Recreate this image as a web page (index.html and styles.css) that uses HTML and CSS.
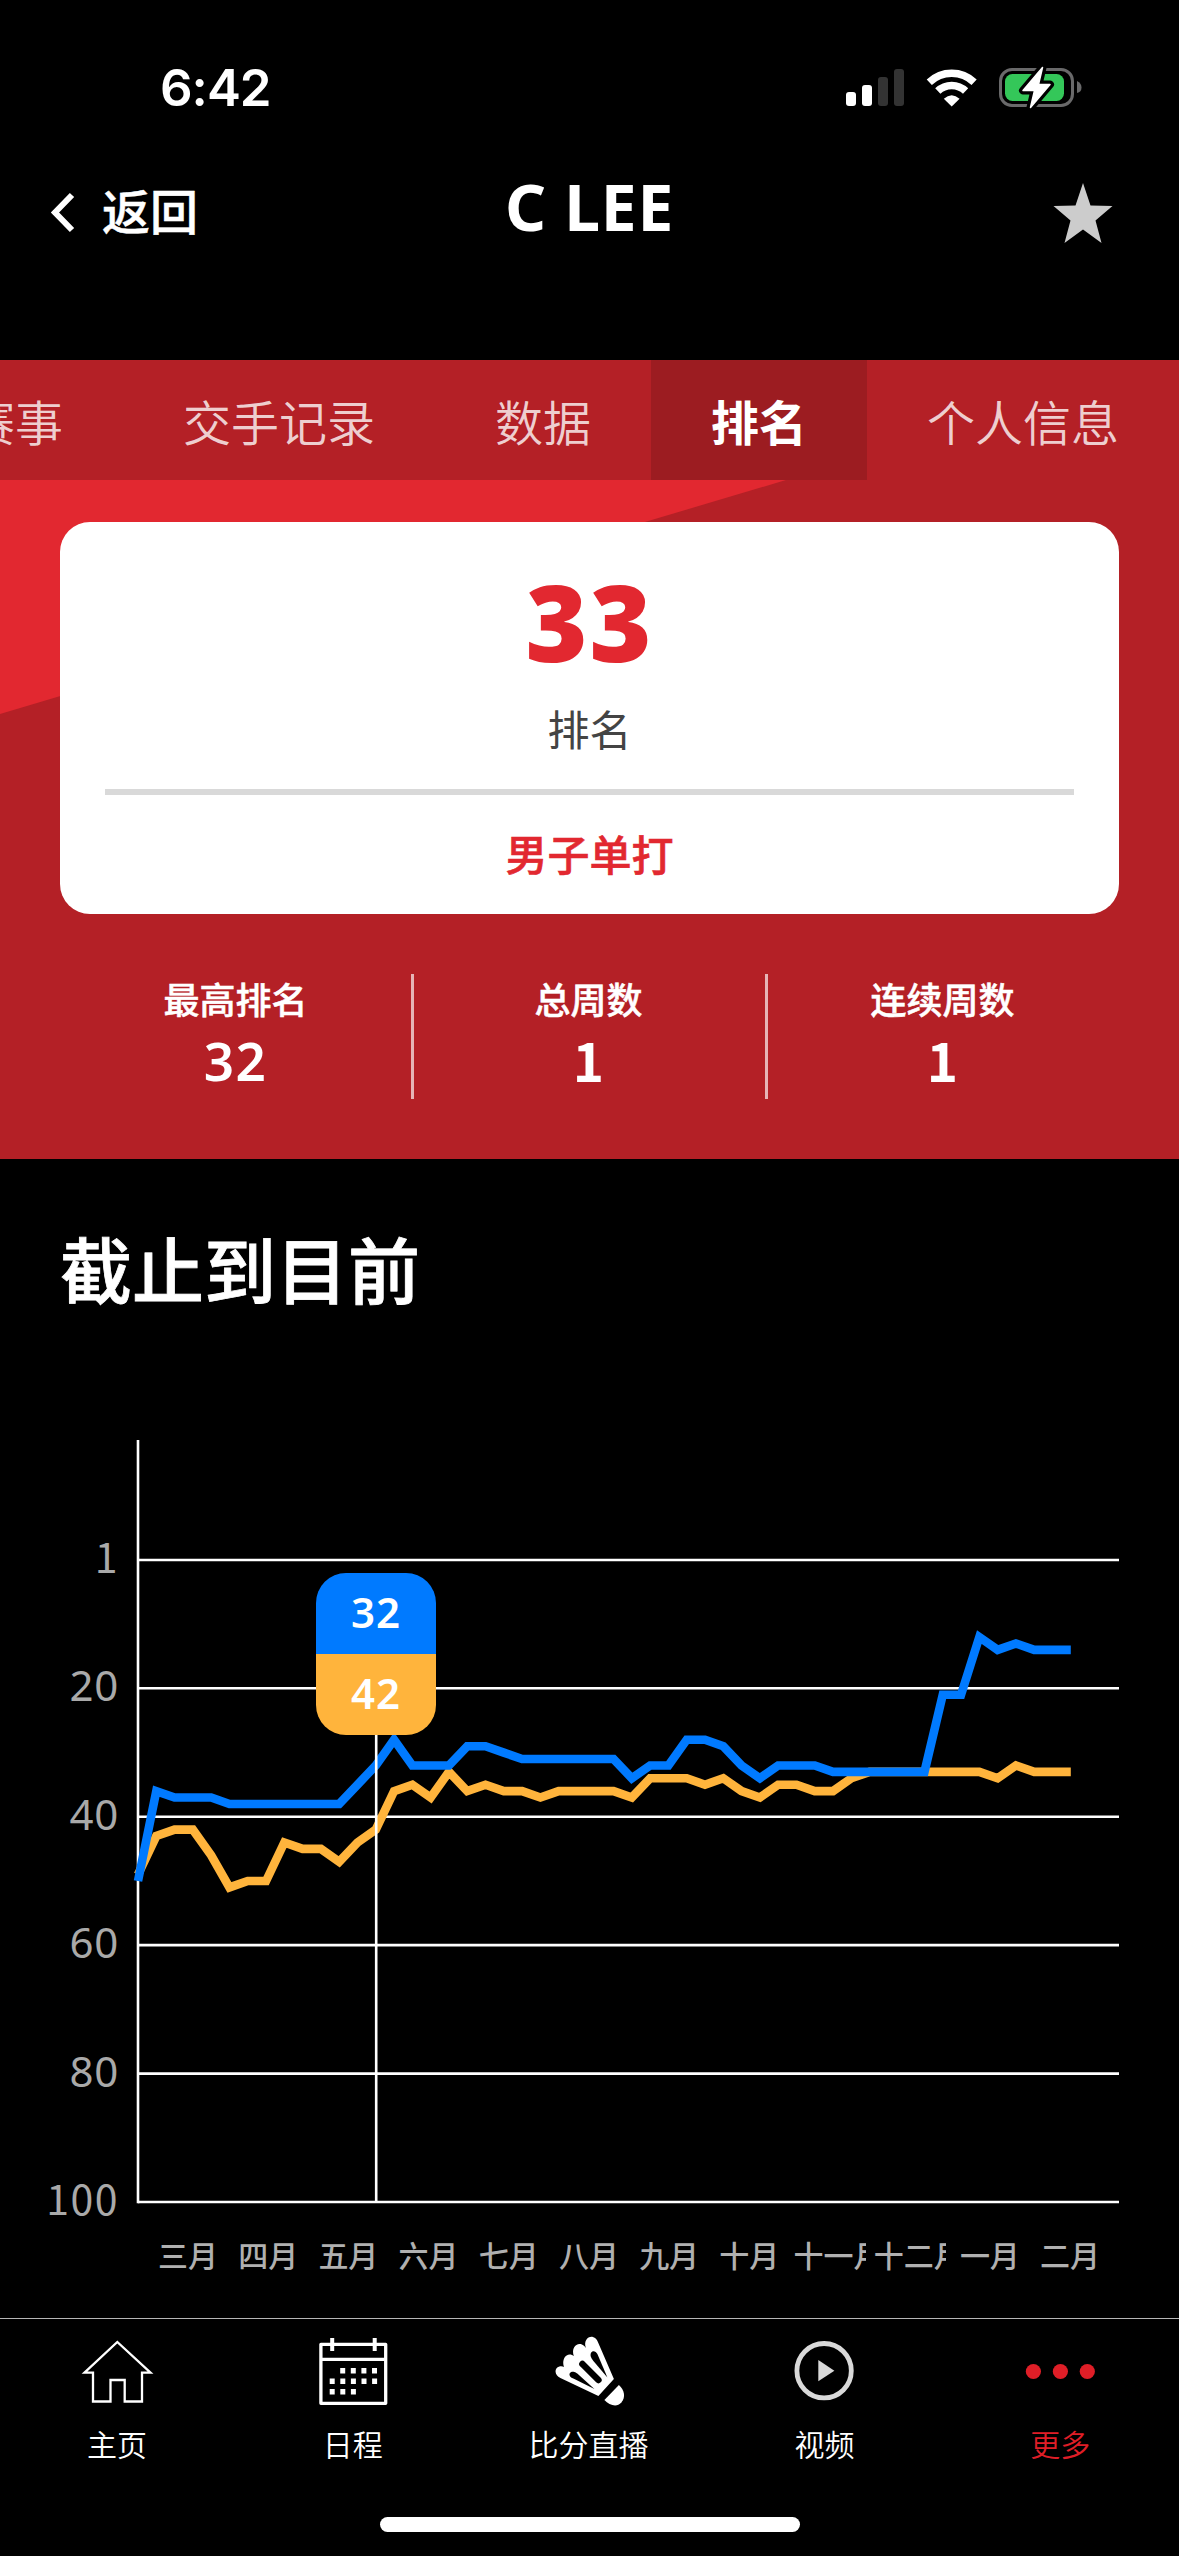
FILE: index.html
```html
<!DOCTYPE html>
<html lang="zh-CN">
<head>
<meta charset="utf-8">
<title>C LEE</title>
<link rel="stylesheet" href="styles.css">
</head>
<body>
<div class="screen">
  <div class="status">
    <span class="clock">6:42</span>
    <svg class="status-icons" width="240" height="44" viewBox="844 65 240 44">
      <g fill="#fff"><rect x="846" y="92" width="10" height="14" rx="3"/><rect x="862" y="85" width="10" height="21" rx="3"/></g>
      <g fill="#333"><rect x="878" y="77" width="10" height="29" rx="3"/><rect x="894" y="69" width="10" height="37" rx="3"/></g>
      <g fill="none" stroke="#fff" stroke-width="7.5">
        <path d="M929.3 82.2A32.5 32.5 0 0 1 974.1 82.2"/>
        <path d="M937.8 91A20 20 0 0 1 965.6 91"/>
      </g>
      <path fill="#fff" d="M943.8 98.8Q951.7 91.5 959.6 98.8L951.7 106.5Z"/>
      <rect x="1000.5" y="69.5" width="72" height="36" rx="11.5" fill="none" stroke="#69696a" stroke-width="3"/>
      <path d="M1077 81Q1081.500 83 1081.500 87.500T1077 93Z" fill="#69696a"/>
      <rect x="1005" y="74" width="59" height="27" rx="7.500" fill="#34c759"/>
      <path d="M1042.500 67.500L1023 90.500H1034.500L1030.500 107.500L1050 84.500H1038.500Z" fill="#fff" stroke="#000" stroke-width="8" stroke-linejoin="round"/>
      <path d="M1042.500 67.500L1023 90.500H1034.500L1030.500 107.500L1050 84.500H1038.500Z" fill="#fff" stroke="#fff" stroke-width="1.500" stroke-linejoin="round"/>
    </svg>
  </div>

  <header class="nav">
    <div class="back">
      <svg width="26" height="42" viewBox="0 0 26 42"><path d="M23 3L6 20.500L23 38" fill="none" stroke="#fff" stroke-width="6"/></svg>
      <span>返回</span>
    </div>
    <h1>C LEE</h1>
    <svg class="star" width="60" height="62" viewBox="1053 182 60 62"><path fill="#ccc" d="M1083 183L1090.500 205.500L1112.500 206L1095.500 220.500L1101.500 243L1083 229.500L1064.500 243L1070.500 220.500L1053.500 206L1075.500 205.500Z"/></svg>
  </header>

  <nav class="tabs">
    <span class="tab">赛事</span>
    <span class="tab">交手记录</span>
    <span class="tab">数据</span>
    <span class="tab active">排名</span>
    <span class="tab">个人信息</span>
  </nav>

  <section class="hero">
    <div class="card">
      <div class="rank">33</div>
      <div class="rank-label">排名</div>
      <hr class="rule">
      <div class="event">男子单打</div>
    </div>
    <div class="stats">
      <div class="stat"><span>最高排名</span><b>32</b></div>
      <div class="stat"><span>总周数</span><b class="footed">1</b></div>
      <div class="stat"><span>连续周数</span><b class="footed">1</b></div>
    </div>
  </section>

  <h2>截止到目前</h2>

  <section class="chart">
    <div class="y-axis"><span class="footed">1</span><span>20</span><span>40</span><span>60</span><span>80</span><span class="footed">100</span></div>
    <svg class="plot" width="987" height="768" viewBox="0 0 987 768">
      <g stroke="#fff" stroke-width="2.600">
        <path d="M6 0V763.300"/>
        <path d="M6 120H987M6 248.300H987M6 376.700H987M6 505.100H987M6 633.600H987M6 762H987"/>
      </g>
      <g id="series" fill="none" stroke-width="8.600"></g>
      <path d="M244.200 290V762" stroke="#fff" stroke-width="2.600"/>
    </svg>
    <div class="tooltip"><span class="current">32</span><span class="previous">42</span></div>
    <div class="x-axis"><span>三月</span><span>四月</span><span>五月</span><span>六月</span><span>七月</span><span>八月</span><span>九月</span><span>十月</span><span class="long">十一月</span><span class="long">十二月</span><span>一月</span><span>二月</span></div>
  </section>

  <footer class="tabbar">
    <div class="item">
      <svg width="84" height="76" viewBox="75 2334 84 76"><path fill="none" stroke="#fff" stroke-width="2.300" d="M117.300 2342L84.500 2372.700H93V2401.500H110.500V2380H124.700V2401.500H142V2372.700H150.500Z"/></svg>
      <span>主页</span>
    </div>
    <div class="item">
      <svg width="84" height="76" viewBox="310.800 2334 84 76">
        <path fill="none" stroke="#fff" stroke-width="3.300" stroke-linejoin="round" d="M320.700 2344.300H385.500V2403.300H320.700ZM320.700 2359.300H385.500"/>
        <path stroke="#fff" stroke-width="4" d="M332 2338V2351M374.500 2338V2351"/>
        <path stroke="#fff" stroke-width="5.500" stroke-dasharray="5 5.600" d="M340 2370.700H378M329.500 2381.200H378M329.500 2391.700H357"/>
      </svg>
      <span>日程</span>
    </div>
    <div class="item">
      <svg width="84" height="76" viewBox="546.600 2334 84 76">
        <g transform="translate(540 2325)">
          <path fill="#fff" d="M58 71L20 53C14 50 13.500 43 19 41.500C21 41 22.500 41.500 23.500 42C21 34 26 28 31.500 30C32.500 30.300 33 30.800 33.500 31.300C30.500 23 36 17.500 41.500 19.500C43.500 20.300 44.500 21.500 45.500 23C43 16 47.500 11 52.500 12C55 12.500 56.500 14.500 57.500 17L73.500 54Z"/>
          <g fill="#000"><path d="M29.500 51C28 48 31 46 34 47C36 47.700 37 48.500 38 49.500L54 64L34 54C31.500 53 30.300 52.500 29.500 51Z"/><path d="M50.500 28C52 25 55.500 26 57 29L67 52.500L53 36C50.500 33 49.500 30.500 50.500 28Z"/></g>
          <path d="M42 39L58 55" stroke="#000" stroke-width="6.500" stroke-linecap="round"/>
          <path fill="#fff" d="M78.500 60L64 75C69 80 76 83 81 77.500C85.500 72 84 65 78.500 60Z"/>
        </g>
      </svg>
      <span>比分直播</span>
    </div>
    <div class="item">
      <svg width="84" height="76" viewBox="782.400 2334 84 76"><circle cx="824.500" cy="2370.700" r="27.200" fill="none" stroke="#d9d9d9" stroke-width="4.800"/><path fill="#d9d9d9" d="M818.700 2360L834.800 2370.700L818.700 2381.300Z"/></svg>
      <span>视频</span>
    </div>
    <div class="item more">
      <svg width="84" height="76" viewBox="1018.200 2334 84 76" fill="#df1e27"><circle cx="1033.600" cy="2371.500" r="7.600"/><circle cx="1060.600" cy="2371.500" r="7.600"/><circle cx="1087.500" cy="2371.500" r="7.600"/></svg>
      <span>更多</span>
    </div>
  </footer>
  <div class="home-indicator"></div>
</div>
<script src="chart.js"></script>
</body>
</html>
```
FILE: styles.css
```css
* { box-sizing: border-box; }
body {
  margin: 0;
  background: #000;
  color: #fff;
  font-family: "Noto Sans CJK SC", "Noto Sans", sans-serif;
}
.screen { width: 1179px; height: 2556px; overflow: hidden; display: flex; flex-direction: column; }
svg { display: block; flex: none; }

.status { height: 160px; padding: 65px 95px 0 160px; display: flex; justify-content: space-between; align-items: flex-start; }
.clock { font: 600 51px/46px Inter, sans-serif; letter-spacing: -1px; }

.nav { height: 200px; padding: 22px 66px 0 49px; display: grid; grid-template-columns: 1fr auto 1fr; align-items: start; }
.back { display: flex; align-items: center; gap: 27px; height: 60px; font: 500 48px/60px "Noto Sans CJK TC", sans-serif; -webkit-text-stroke: 0.5px #fff; }
.back svg { margin-top: 2px; }
.back span { margin-top: -6px; }
.nav h1 { margin: -5px 0 0 17px; font-family: "Noto Sans", sans-serif; font-size: 64px; line-height: 60px; font-weight: 700; letter-spacing: 0.800px; }
.star { justify-self: end; }

.tabs { height: 120px; background: #b42026; display: flex; justify-content: flex-end; }
.tab { flex: none; padding: 0 60px; font-size: 48px; line-height: 121px; color: rgba(255,255,255,.8); font-weight: 350; }
.tab.active { background: #9c1c21; color: #fff; font-weight: 700; }

.hero { height: 679px; padding: 42px 60px 0; background: #b42026; position: relative; isolation: isolate; }
.hero::before { content: ""; position: absolute; z-index: -1; left: 0; top: 0; width: 786px; height: 234px; background: #e22830; clip-path: polygon(0 0, 100% 0, 0 100%); }
.card { height: 392px; padding: 40px 45px 0; border-radius: 30px; background: #fff; text-align: center; }
.rank { font-family: "Noto Sans", sans-serif; font-size: 106px; line-height: 118px; font-weight: 900; color: #e22830; letter-spacing: 2px; }
.rank-label { margin-top: 18px; font-size: 42px; line-height: 60px; color: #444; }
.rule { margin: 31px 0 0; border: 0; height: 6px; background: #d9d9d9; }
.event { margin-top: 28px; font-size: 42px; line-height: 60px; font-weight: 500; color: #e22830; -webkit-text-stroke: 0.6px #e22830; }
.stats { margin-top: 60px; height: 125px; display: grid; grid-template-columns: 351px 354px 1fr; }
.stat { display: flex; flex-direction: column; align-items: center; border-left: 3px solid #e6b4b6; padding-right: 2px; }
.stat:first-child { border-left: 0; padding-right: 0; }
.stat span { margin-top: -2px; font-size: 36px; line-height: 52px; font-weight: 500; -webkit-text-stroke: 0.5px #fff; }
.stat b { font-family: "Noto Sans", sans-serif; font-size: 53px; line-height: 73px; font-weight: 600; letter-spacing: 1.500px; }
.stat .footed { font-family: "Noto Sans CJK SC", sans-serif; line-height: 70px; font-weight: 700; letter-spacing: 0; }

h2 { margin: 60px 0 0 60px; font-size: 72px; line-height: 96px; height: 99px; font-weight: 500; -webkit-text-stroke: 0.800px #fff; }

.chart { position: relative; margin-top: 122px; height: 878px; display: grid; grid-template: 768px 1fr / 119px 1fr; column-gap: 13px; }
.y-axis { padding-top: 86px; display: grid; grid-template-rows: repeat(6, 128.400px); align-content: start; text-align: right; font-family: "Noto Sans", sans-serif; font-size: 42px; line-height: 62px; letter-spacing: 0.700px; color: #a9a9a9; }
.y-axis .footed { font-family: "Noto Sans CJK SC", sans-serif; font-size: 41px; line-height: 59px; letter-spacing: 1.500px; }
.tooltip { position: absolute; left: 316px; top: 133px; width: 120px; height: 162px; border-radius: 30px; overflow: hidden; display: grid; grid-template-rows: 1fr 1fr; text-align: center; font-family: "Noto Sans", sans-serif; font-size: 42px; line-height: 77px; font-weight: 600; letter-spacing: 1px; }
.current { background: #007aff; }
.previous { background: #ffb43c; }
.x-axis { grid-column: 1 / -1; margin-left: 152px; display: flex; gap: 8.200px; padding-top: 24px; font-size: 30px; line-height: 44px; font-weight: 500; color: #b0b0b0; }
.x-axis span { flex: none; width: 72px; height: 44px; overflow: hidden; text-align: center; white-space: nowrap; }
.x-axis .long { text-align: left; }

.tabbar { height: 199px; border-top: 1px solid #b5b5b5; display: grid; grid-template-columns: repeat(5, 1fr); }
.item { display: flex; flex-direction: column; align-items: center; padding: 15px 1.800px 0 0; font-size: 30px; font-weight: 350; }
.item span { margin-top: 11px; line-height: 44px; }
.more { color: #df1e27; }
.home-indicator { width: 420px; height: 15px; border-radius: 8px; background: #fff; margin: 0 auto; }
```
FILE: chart.js
```js
const current = [50,36,37,37,37,38,38,38,38,38,38,38,35,32,28,32,32,32,29,29,30,31,31,31,31,31,31,34,32,32,28,28,29,32,34,32,32,32,33,33,33,33,33,33,21,21,12,14,13,14,14,14];
const previous = [49,43,42,42,46,51,50,50,44,45,45,47,44,42,36,35,37,33,36,35,36,36,37,36,36,36,36,37,34,34,34,35,34,36,37,35,35,36,36,34,33,33,33,33,33,33,33,34,32,33,33,33];

function addSeries(values, color) {
  const line = document.createElementNS("http://www.w3.org/2000/svg", "polyline");
  line.setAttribute("points", values.map((v, i) => `${6 + i * 18.29},${120 + v * 6.42}`).join(" "));
  line.setAttribute("stroke", color);
  document.getElementById("series").appendChild(line);
}

addSeries(previous, "#ffb43c");
addSeries(current, "#007aff");
```
